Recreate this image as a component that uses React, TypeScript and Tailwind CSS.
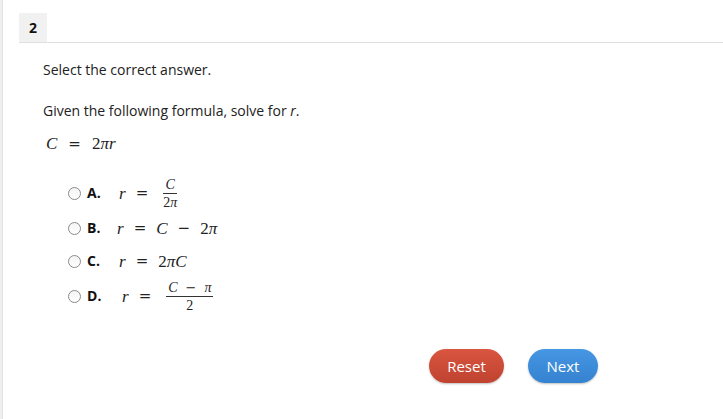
import React, { useState } from 'react';

const mathFont = { fontFamily: '"Liberation Serif", "Times New Roman", serif' };
const opFont = { fontFamily: '"DejaVu Serif", serif' };

const Op: React.FC<{ children: React.ReactNode; m?: string }> = ({ children, m = 'mx-[10px]' }) => (
  <span className={`${m} text-[15px] font-light`} style={opFont}>{children}</span>
);

const Frac: React.FC<{ top: React.ReactNode; bottom: React.ReactNode }> = ({ top, bottom }) => (
  <span className="inline-flex flex-col items-center align-middle text-[14px] leading-[13px] ml-[4px] px-[1px]">
    <span className="px-[2px] pb-[2px]">{top}</span>
    <span className="border-t border-[#333] w-full text-center pt-[2px]">{bottom}</span>
  </span>
);

const I: React.FC<{ children: React.ReactNode }> = ({ children }) => <span className="italic">{children}</span>;

const options = [
  {
    key: 'A',
    h: 'h-[37px]',
    math: (
      <span className="flex items-center">
        <I>r</I>
        <Op>=</Op>
        <Frac top={<I>C</I>} bottom={<span>2<I>π</I></span>} />
      </span>
    ),
  },
  {
    key: 'B',
    h: 'h-[33px]',
    math: (
      <span className="flex items-center -ml-[2px]">
        <I>r</I>
        <Op>=</Op>
        <I>C</I>
        <Op>−</Op>
        <span>2<I>π</I></span>
      </span>
    ),
  },
  {
    key: 'C',
    h: 'h-[33px]',
    math: (
      <span className="flex items-center">
        <I>r</I>
        <Op>=</Op>
        <span>2<I>π</I><I>C</I></span>
      </span>
    ),
  },
  {
    key: 'D',
    h: 'h-[37px]',
    math: (
      <span className="flex items-center ml-[3px]">
        <I>r</I>
        <Op>=</Op>
        <Frac
          top={
            <span className="flex items-center">
              <I>C</I>
              <span className="mx-[8px] text-[13px]" style={opFont}>−</span>
              <I>π</I>
            </span>
          }
          bottom={<span>2</span>}
        />
      </span>
    ),
  },
];

export default function App() {
  const [selected, setSelected] = useState<string | null>(null);

  return (
    <div
      className="w-[723px] h-[419px] bg-white flex text-[#222] overflow-hidden"
      style={{ fontFamily: '"Open Sans", "Noto Sans", sans-serif' }}
    >
      <div className="w-[3px] bg-[#efefef] border-r border-[#e2e2e2] shrink-0" />
      <div className="flex-1 pl-[16px] pt-[13px]">
        {/* header */}
        <div className="flex border-b border-[#e0e0e0]">
          <div className="w-[28px] h-[29px] bg-[#f1f1f1] flex items-center justify-center text-[14px] font-bold text-[#111]">
            2
          </div>
        </div>

        <div className="pl-[24px] pt-[17px]">
          <p className="text-[14px] leading-[20px]">Select the correct answer.</p>
          <p className="text-[14px] leading-[20px] mt-[21px]">
            Given the following formula, solve for <span className="italic">r</span>.
          </p>
          <div className="mt-[13px] h-[20px] flex items-center text-[17px] pl-[3px]" style={mathFont}>
            <I>C</I>
            <Op m="mx-[11px]">=</Op>
            <span>2<I>π</I><I>r</I></span>
          </div>

          <div className="mt-[21px] pl-[25px]">
            {options.map(o => (
              <label key={o.key} className={`flex items-center cursor-pointer ${o.h}`}>
                <input
                  type="radio"
                  name="answer"
                  checked={selected === o.key}
                  onChange={() => setSelected(o.key)}
                  className="appearance-none w-[13px] h-[13px] rounded-full border border-[#8a8a8a] bg-gradient-to-b from-[#f4f4f4] to-white checked:bg-[#4a90d9] m-0 shrink-0"
                />
                <span className="w-[38px] pl-[6px] text-[14px] font-bold text-[#111] -mt-[2px]">{o.key}.</span>
                <span className="text-[17px] text-[#222]" style={mathFont}>
                  {o.math}
                </span>
              </label>
            ))}
          </div>

          <div className="flex mt-[34px] pl-[386px] gap-[24px]">
            <button className="w-[75px] h-[34px] rounded-full bg-gradient-to-b from-[#d9553f] to-[#bf4330] text-white text-[15px] shadow-[0_1px_2px_rgba(0,0,0,0.25)]">
              Reset
            </button>
            <button className="w-[70px] h-[34px] rounded-full bg-gradient-to-b from-[#4596e3] to-[#3582d0] text-white text-[15px] shadow-[0_1px_2px_rgba(0,0,0,0.25)]">
              Next
            </button>
          </div>
        </div>
      </div>
    </div>
  );
}
